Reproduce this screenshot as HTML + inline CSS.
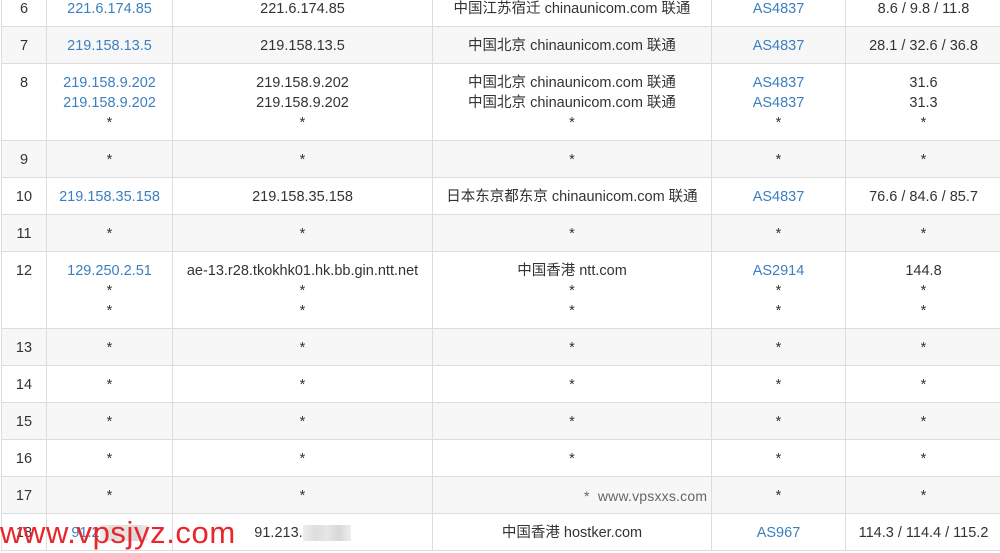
<!DOCTYPE html>
<html><head><meta charset="utf-8"><style>
body{margin:0;width:1000px;height:549px;overflow:hidden;background:#fff;position:relative;font-family:"Liberation Sans","Noto Sans CJK SC",sans-serif;font-size:14.5px;color:#333}
table{position:absolute;top:-11px;left:1px;border-collapse:collapse;width:1000px;table-layout:fixed}
td{border:1px solid #ddd;text-align:center;vertical-align:top;padding:9px 0 0;line-height:20px;box-sizing:border-box;white-space:nowrap}
tr{height:37px}
tr.t{height:77px}
tr.g td{background:#f7f7f7}
.b{color:#3b7fc0}
.wm{position:absolute;left:0;top:513px;font-size:31px;color:#e8262c;letter-spacing:0.6px;line-height:40px}
.wm2{position:absolute;left:584px;top:488px;font-size:14px;color:#666;letter-spacing:0.2px}
.blur{display:inline-block;width:48px;height:16px;background:linear-gradient(90deg,#eee,#ddd,#e6e6e6,#d8d8d8,#eee);vertical-align:middle}
</style></head><body>
<table>
<col style="width:45px"><col style="width:126px"><col style="width:260px"><col style="width:279px"><col style="width:134px"><col style="width:156px">
<tr><td>6</td><td class="b">221.6.174.85</td><td>221.6.174.85</td><td>中国江苏宿迁 chinaunicom.com 联通</td><td class="b">AS4837</td><td>8.6 / 9.8 / 11.8</td></tr>
<tr class="g"><td>7</td><td class="b">219.158.13.5</td><td>219.158.13.5</td><td>中国北京 chinaunicom.com 联通</td><td class="b">AS4837</td><td>28.1 / 32.6 / 36.8</td></tr>
<tr class="t"><td>8</td><td class="b">219.158.9.202<br>219.158.9.202<br><span style="color:#333">*</span></td><td>219.158.9.202<br>219.158.9.202<br>*</td><td>中国北京 chinaunicom.com 联通<br>中国北京 chinaunicom.com 联通<br>*</td><td class="b">AS4837<br>AS4837<br><span style="color:#333">*</span></td><td>31.6<br>31.3<br>*</td></tr>
<tr class="g"><td>9</td><td>*</td><td>*</td><td>*</td><td>*</td><td>*</td></tr>
<tr><td>10</td><td class="b">219.158.35.158</td><td>219.158.35.158</td><td>日本东京都东京 chinaunicom.com 联通</td><td class="b">AS4837</td><td>76.6 / 84.6 / 85.7</td></tr>
<tr class="g"><td>11</td><td>*</td><td>*</td><td>*</td><td>*</td><td>*</td></tr>
<tr class="t"><td>12</td><td class="b">129.250.2.51<br><span style="color:#333">*<br>*</span></td><td>ae-13.r28.tkokhk01.hk.bb.gin.ntt.net<br>*<br>*</td><td>中国香港 ntt.com<br>*<br>*</td><td class="b">AS2914<br><span style="color:#333">*<br>*</span></td><td>144.8<br>*<br>*</td></tr>
<tr class="g"><td>13</td><td>*</td><td>*</td><td>*</td><td>*</td><td>*</td></tr>
<tr><td>14</td><td>*</td><td>*</td><td>*</td><td>*</td><td>*</td></tr>
<tr class="g"><td>15</td><td>*</td><td>*</td><td>*</td><td>*</td><td>*</td></tr>
<tr><td>16</td><td>*</td><td>*</td><td>*</td><td>*</td><td>*</td></tr>
<tr class="g"><td>17</td><td>*</td><td>*</td><td>&nbsp;</td><td>*</td><td>*</td></tr>
<tr><td>18</td><td class="b">91.2<span class="blur"></span></td><td>91.213.<span class="blur"></span></td><td>中国香港 hostker.com</td><td class="b">AS967</td><td>114.3 / 114.4 / 115.2</td></tr>
</table>
<div class="wm2">*&nbsp; www.vpsxxs.com</div>
<div class="wm">www.vpsjyz.com</div>
</body></html>
